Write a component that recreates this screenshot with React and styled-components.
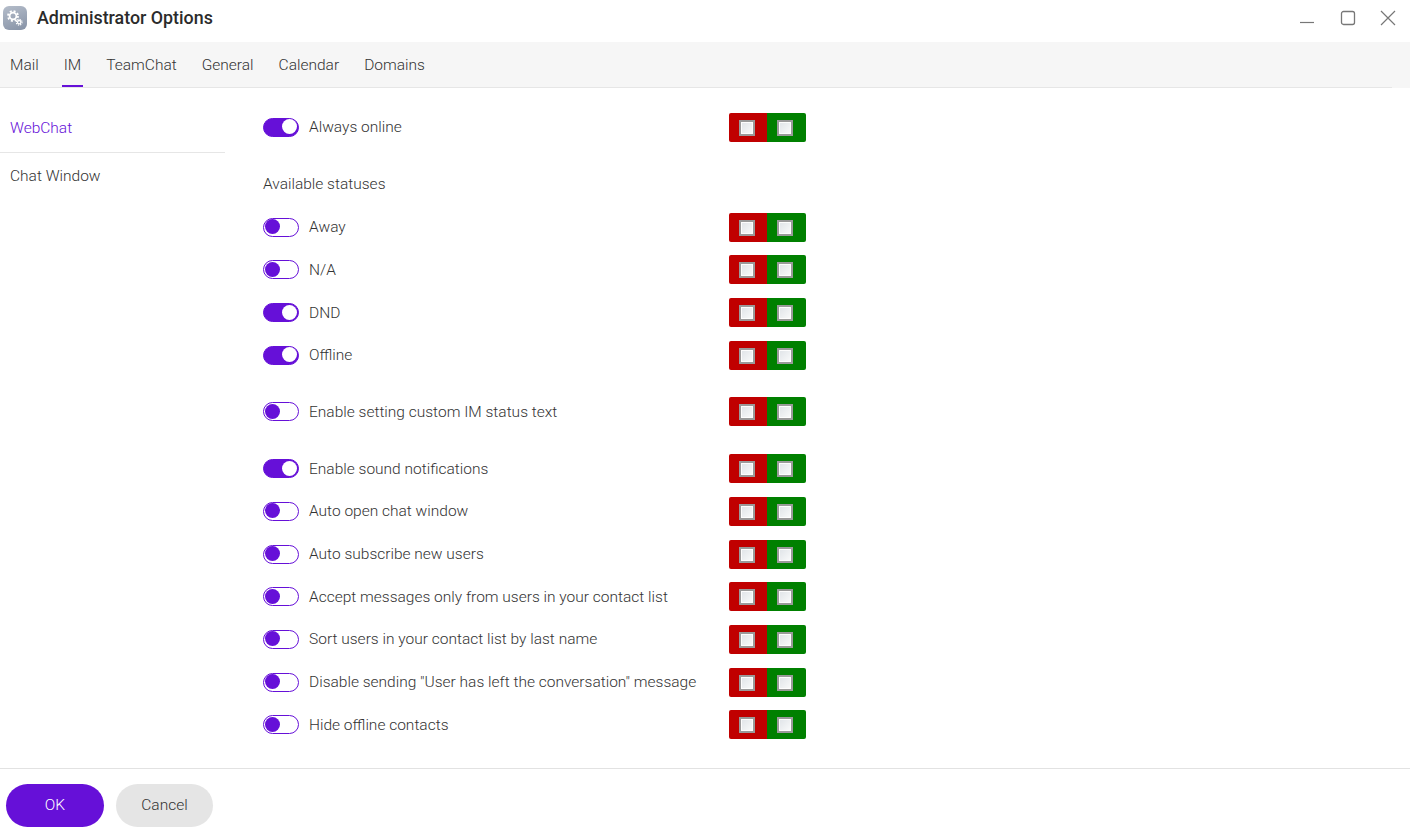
import React from 'react';
import styled, {createGlobalStyle} from 'styled-components';

const GlobalStyle = createGlobalStyle`
	html, body {
		margin: 0;
		padding: 0;
		background: #fff;
	}
	body {
		font-family: Roboto, "Liberation Sans", sans-serif;
		font-size: 15.5px;
		color: #444;
	}
`;

const Page = styled.div`
	display: flex;
	flex-direction: column;
	width: 1410px;
	height: 834px;
	overflow: hidden;
`;

const TitleBar = styled.header`
	display: flex;
	align-items: center;
	height: 42px;
	flex: none;
	padding: 0 14px 6px 3px;
	box-sizing: border-box;
`;

const AppIcon = styled.div`
	display: flex;
	align-items: center;
	justify-content: center;
	width: 24px;
	height: 24px;
	border-radius: 6px;
	background: linear-gradient(160deg, #b5bdca, #8692a6);
`;

const Title = styled.h1`
	margin: 0 0 2px 10px;
	font-size: 17.85px;
	font-weight: 500;
	color: #2b2b2b;
	flex: 1;
`;

const WindowButtons = styled.div`
	display: flex;
	align-items: center;
	gap: 24px;
	color: #777;
`;

const TabBar = styled.nav`
	display: flex;
	flex: none;
	gap: 25px;
	height: 46px;
	padding-left: 10px;
	background: #f6f6f6;
	box-sizing: border-box;
	position: relative;
	&::after {
		content: '';
		position: absolute;
		left: 0;
		bottom: 0;
		width: 1392px;
		height: 1px;
		background: #e6e6e6;
	}
`;

const Tab = styled.div`
	display: flex;
	align-items: center;
	height: 45px;
	box-sizing: border-box;
	position: relative;
	font-weight: 300;
	color: #333;
	&::after {
		content: '';
		display: ${props => props.$active ? 'block' : 'none'};
		position: absolute;
		left: -2px;
		right: -2px;
		bottom: -1px;
		height: 3px;
		background: #6610d8;
	}
`;

const Body = styled.div`
	display: flex;
	flex: 1;
	min-height: 0;
`;

const Sidebar = styled.aside`
	width: 225px;
	flex: none;
	padding-top: 16px;
	margin-right: 1px;
`;

const SideItem = styled.div`
	display: flex;
	align-items: center;
	height: ${props => props.$active ? '49px' : '48px'};
	padding: ${props => props.$active ? '0 0 1px 10px' : '0 0 3px 10px'};
	font-weight: 300;
	color: ${props => props.$active ? '#6610d8' : '#333'};
	border-bottom: ${props => props.$active ? '1px solid #e6e6e6' : 'none'};
	box-sizing: border-box;
`;

const Content = styled.main`
	flex: 1;
	padding: 18px 0 0 37px;
`;

const Group = styled.section`
	margin-bottom: 14.02px;
`;

const Heading = styled.div`
	display: flex;
	align-items: center;
	height: 42px;
	margin-bottom: 1.27px;
	font-weight: 300;
	color: #333;
`;

const Row = styled.div`
	display: flex;
	align-items: center;
	height: 42.68px;
`;

const Track = styled.span`
	display: block;
	width: 36px;
	height: 19px;
	flex: none;
	border: 1.5px solid #6610d8;
	border-radius: 10px;
	background: ${props => props.$on ? '#6610d8' : '#fff'};
	box-sizing: border-box;
	position: relative;
	&::after {
		content: '';
		position: absolute;
		top: 0.5px;
		left: ${props => props.$on ? '17.5px' : '0.5px'};
		width: 15px;
		height: 15px;
		border-radius: 50%;
		background: ${props => props.$on ? '#fff' : '#6610d8'};
	}
`;

const RowLabel = styled.span`
	width: 420px;
	margin-left: 10px;
	flex: none;
	font-weight: 300;
	color: #333;
	white-space: nowrap;
`;

const Pair = styled.div`
	display: flex;
	height: 29px;
	border-radius: 2px;
	overflow: hidden;
`;

const PairSide = styled.div`
	display: flex;
	align-items: center;
	justify-content: center;
	width: ${props => props.$no ? '38px' : '39px'};
	padding: ${props => props.$no ? '1px 2px 0 0' : '1px 3px 0 0'};
	box-sizing: border-box;
	background: ${props => props.$no ? '#c00000' : '#008000'};
`;

const FakeCheck = styled.span`
	display: block;
	width: 16px;
	height: 16px;
	box-sizing: border-box;
	border: 2px solid #9a9a9a;
	box-shadow: inset 0 0 0 1px #fdfdfd;
	background: linear-gradient(135deg, #dfe3e7, #fafbfb);
`;

const Footer = styled.footer`
	display: flex;
	flex: none;
	gap: 12px;
	height: 66px;
	padding: 15px 0 0 6px;
	border-top: 1px solid #e2e2e2;
	box-sizing: border-box;
`;

const Btn = styled.button`
	height: 43px;
	width: ${props => props.$primary ? '98px' : '97px'};
	padding: 0 0 2px;
	border: 0;
	border-radius: 22px;
	font-family: Roboto, sans-serif;
	font-size: 15.5px;
	font-weight: 300;
	color: ${props => props.$primary ? '#fff' : '#333'};
	background: ${props => props.$primary ? '#6610d8' : '#e5e5e5'};
`;

const tabs = ['Mail', 'IM', 'TeamChat', 'General', 'Calendar', 'Domains'];

const groups = [
	[{label: 'Always online', on: true}],
	null,
	[
		{label: 'Away'},
		{label: 'N/A'},
		{label: 'DND', on: true},
		{label: 'Offline', on: true}
	],
	[{label: 'Enable setting custom IM status text'}],
	[
		{label: 'Enable sound notifications', on: true},
		{label: 'Auto open chat window'},
		{label: 'Auto subscribe new users'},
		{label: 'Accept messages only from users in your contact list'},
		{label: 'Sort users in your contact list by last name'},
		{label: 'Disable sending "User has left the conversation" message'},
		{label: 'Hide offline contacts'}
	]
];

const GearsIcon = () => (
	<svg width="18" height="18" viewBox="0 0 18 18" fill="none" stroke="#fff">
		<circle cx="7" cy="7" r="3.4" strokeWidth="1.8"/>
		<circle cx="7" cy="7" r="5" strokeWidth="1.8" strokeDasharray="2 1.93"/>
		<circle cx="13.2" cy="13.2" r="1.7" strokeWidth="1.3"/>
		<circle cx="13.2" cy="13.2" r="2.9" strokeWidth="1.2" strokeDasharray="1.2 1.08"/>
	</svg>
);

const OptionRow = ({label, on}) => (
	<Row>
		<Track $on={on}/>
		<RowLabel>{label}</RowLabel>
		<Pair>
			<PairSide $no><FakeCheck/></PairSide>
			<PairSide><FakeCheck/></PairSide>
		</Pair>
	</Row>
);

function App() {
	return (
		<Page>
			<GlobalStyle/>
			<TitleBar>
				<AppIcon><GearsIcon/></AppIcon>
				<Title>Administrator Options</Title>
				<WindowButtons>
					<svg width="16" height="16" viewBox="0 0 16 16"><path d="M0 12.5h14" stroke="currentColor" strokeWidth="1.2"/></svg>
					<svg width="16" height="16" viewBox="0 0 16 16" fill="none"><rect x="1.5" y="1.5" width="13" height="13" rx="2" stroke="currentColor" strokeWidth="1.3"/></svg>
					<svg width="16" height="16" viewBox="0 0 16 16" fill="none"><path d="M1 1l14 14M15 1L1 15" stroke="currentColor" strokeWidth="1.2"/></svg>
				</WindowButtons>
			</TitleBar>
			<TabBar>
				{tabs.map(t => <Tab key={t} $active={t === 'IM'}>{t}</Tab>)}
			</TabBar>
			<Body>
				<Sidebar>
					<SideItem $active>WebChat</SideItem>
					<SideItem>Chat Window</SideItem>
				</Sidebar>
				<Content>
					{groups.map((group, i) => group ? (
						<Group key={i}>
							{group.map(item => <OptionRow key={item.label} {...item}/>)}
						</Group>
					) : (
						<Heading key={i}>Available statuses</Heading>
					))}
				</Content>
			</Body>
			<Footer>
				<Btn $primary>OK</Btn>
				<Btn>Cancel</Btn>
			</Footer>
		</Page>
	);
}

export default App;
